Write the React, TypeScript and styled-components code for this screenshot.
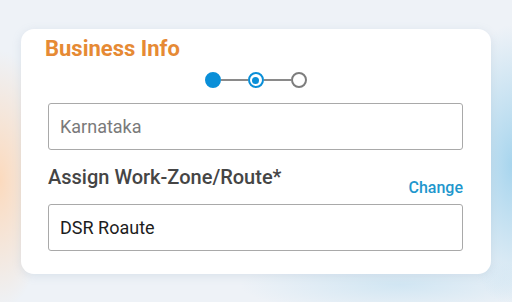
import React from "react";
import styled, { createGlobalStyle } from "styled-components";

const Global = createGlobalStyle`
  html, body { margin: 0; padding: 0; }
  body {
    width: 512px;
    height: 302px;
    overflow: hidden;
    font-family: Roboto, "Liberation Sans", Arial, sans-serif;
    background:
      radial-gradient(ellipse 50px 130px at 0px 180px, rgba(255, 212, 175, 0.8), rgba(255, 212, 175, 0) 100%),
      radial-gradient(ellipse 60px 140px at 512px 165px, rgba(155, 208, 236, 0.85), rgba(155, 208, 236, 0) 100%),
      radial-gradient(ellipse 160px 30px at 400px 285px, rgba(190, 222, 240, 0.6), rgba(190, 222, 240, 0) 100%),
      #eef2f7;
  }
`;

const Page = styled.div`
  padding: 29px 21px 0 21px;
`;

const Card = styled.div`
  width: 470px;
  height: 245px;
  box-sizing: border-box;
  background: #ffffff;
  border-radius: 13px;
  box-shadow: 0 2px 10px rgba(120, 150, 180, 0.18);
  padding: 7px 28px 0 27px;
  display: flex;
  flex-direction: column;
`;

const Title = styled.h2`
  margin: 0 0 0 -3px;
  font-size: 22px;
  line-height: 26px;
  font-weight: 700;
  color: #e68a34;
`;

const Stepper = styled.div`
  display: flex;
  align-items: center;
  justify-content: center;
  margin-top: 10px;
  height: 16px;
`;

const Dot = styled.div<{ $state: "done" | "active" | "todo" }>`
  width: 16px;
  height: 16px;
  box-sizing: border-box;
  border-radius: 50%;
  position: relative;
  background: ${(p) => (p.$state === "done" ? "#0a8fd8" : "#ffffff")};
  border: 2px solid ${(p) => (p.$state === "todo" ? "#7d7d7d" : "#0a8fd8")};
  &::after {
    content: "";
    display: ${(p) => (p.$state === "active" ? "block" : "none")};
    position: absolute;
    left: 50%;
    top: 50%;
    width: 7px;
    height: 7px;
    margin: -3.5px 0 0 -3.5px;
    border-radius: 50%;
    background: #0a8fd8;
  }
`;

const Line = styled.div`
  width: 27px;
  height: 2px;
  background: #8a8a8a;
`;

const Field = styled.div`
  height: 47px;
  box-sizing: border-box;
  border: 1px solid #a9a9a9;
  border-radius: 3px;
  display: flex;
  align-items: center;
  padding: 0 11px;
`;

const Stack = styled.div`
  margin-top: 15px;
  display: flex;
  flex-direction: column;
`;

const FieldText = styled.span<{ $muted?: boolean }>`
  font-size: 18px;
  color: ${(p) => (p.$muted ? "#7a7a7a" : "#1d1d1d")};
  line-height: 21px;
`;

const LabelRow = styled.div`
  display: flex;
  justify-content: space-between;
  align-items: flex-start;
  margin: 15px 0 7px 0;
`;

const Label = styled.span`
  font-size: 20px;
  line-height: 24px;
  font-weight: 500;
  color: #454545;
`;

const Change = styled.span`
  margin-top: 13px;
  font-size: 16px;
  line-height: 19px;
  font-weight: 500;
  color: #1f97cd;
`;

export default function App() {
  return (
    <>
      <Global />
      <Page>
        <Card>
          <Title>Business Info</Title>
          <Stepper>
            <Dot $state="done" />
            <Line />
            <Dot $state="active" />
            <Line />
            <Dot $state="todo" />
          </Stepper>
          <Stack>
            <Field>
              <FieldText $muted>Karnataka</FieldText>
            </Field>
            <LabelRow>
              <Label>Assign Work-Zone/Route*</Label>
              <Change>Change</Change>
            </LabelRow>
            <Field>
              <FieldText>DSR Roaute</FieldText>
            </Field>
          </Stack>
        </Card>
      </Page>
    </>
  );
}
